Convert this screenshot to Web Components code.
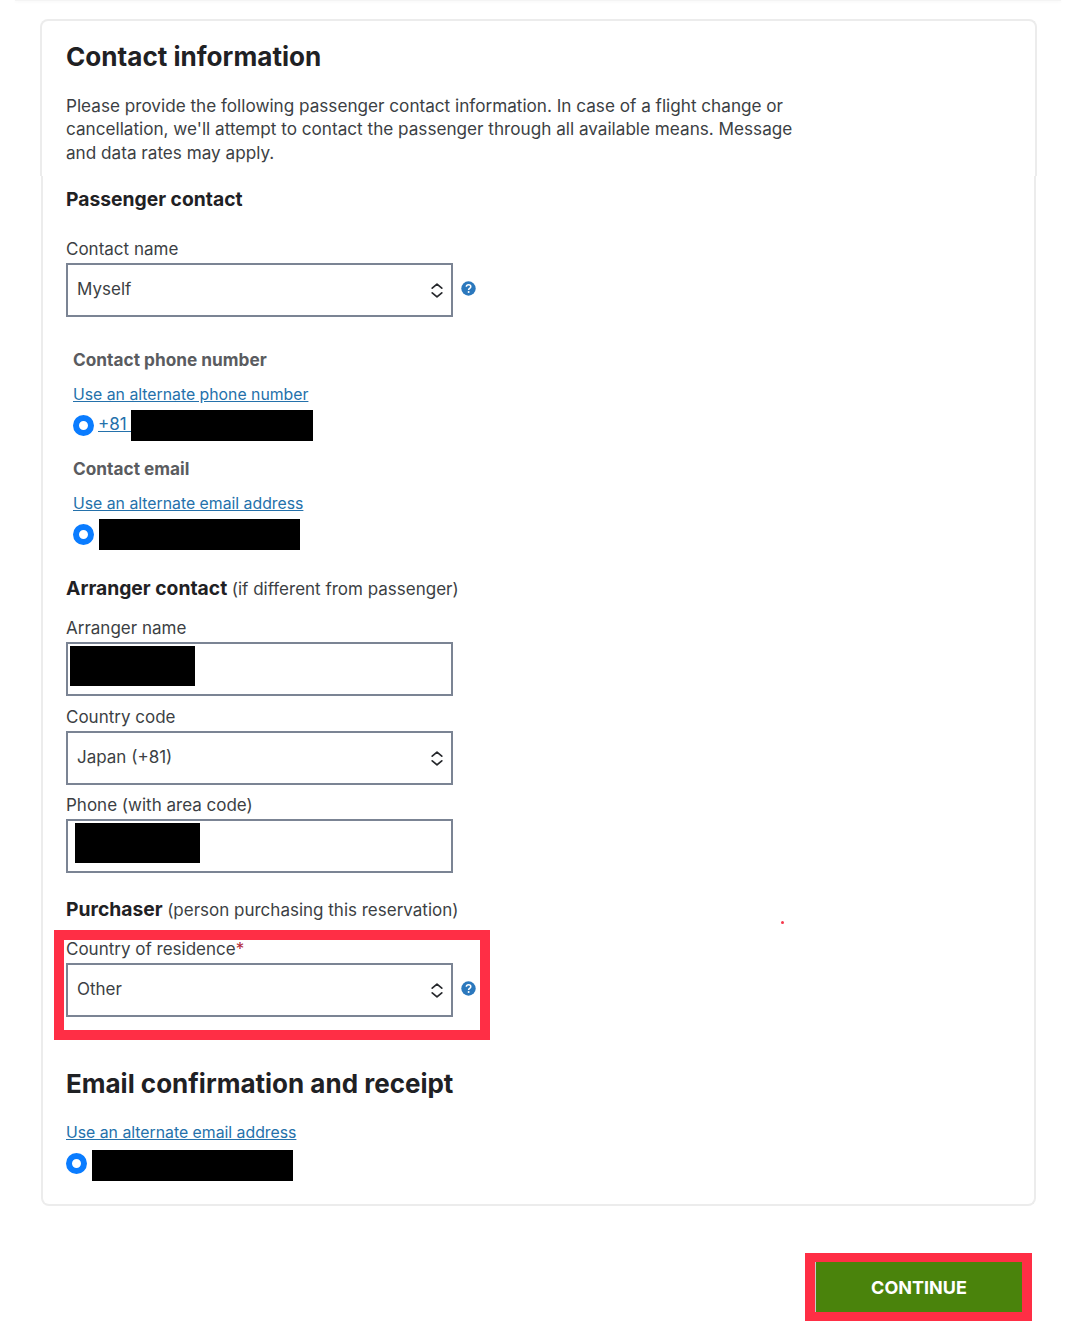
<!doctype html>
<html lang="en">
<head>
<meta charset="utf-8">
<title>Contact information</title>
<style>
  html, body { margin: 0; background: #fff; }
  body { font-family: "Inter", "Liberation Sans", sans-serif; color: #2a2c30; }
</style>
</head>
<body>
<checkout-page>
  <contact-card>
    <card-intro slot="intro" title-text="Contact information">
      Please provide the following passenger contact information. In case of a flight change or
      cancellation, we'll attempt to contact the passenger through all available means. Message
      and data rates may apply.
    </card-intro>

    <section-title style="margin-top:0">Passenger contact</section-title>
    <form-select style="margin-top:26px" label="Contact name" value="Myself" help></form-select>

    <contact-option style="margin-top:32px" heading="Contact phone number" link="Use an alternate phone number" phone="+81 " block="182"></contact-option>
    <contact-option style="margin-top:17px" heading="Contact email" link="Use an alternate email address" block="201"></contact-option>

    <section-title style="margin-top:25px">Arranger contact <span>(if different from passenger)</span></section-title>
    <text-field style="margin-top:15px" label="Arranger name" block-left="2"></text-field>
    <form-select style="margin-top:10px" label="Country code" value="Japan (+81)"></form-select>
    <text-field style="margin-top:9px" label="Phone (with area code)" block-left="7"></text-field>

    <section-title style="margin-top:23px">Purchaser <span>(person purchasing this reservation)</span></section-title>
    <callout-frame style="margin-top:15px">
      <form-select label="Country of residence" value="Other" required help></form-select>
    </callout-frame>

    <section-title big style="margin-top:49px">Email confirmation and receipt</section-title>
    <contact-option bare style="margin-top:19px" link="Use an alternate email address" block="201"></contact-option>
  </contact-card>
  <continue-bar>CONTINUE</continue-bar>
</checkout-page>

<script>
  // shared text settings, custom properties go through the shadow boundary
  const base = `
    * { box-sizing: border-box; }
  `;

  function shadow(el, html) {
    el.attachShadow({ mode: 'open' });
    el.shadowRoot.innerHTML = `<style>${base}</style>` + html;
  }

  customElements.define('checkout-page', class extends HTMLElement {
    connectedCallback() {
      shadow(this, `
        <style>
          :host { display: block; width: 1083px; height: 1342px; overflow: hidden; position: relative; }
          .strip { height: 1px; margin: 0 22px 0 15px; background: #f4f4f4; box-shadow: 0 1px 3px #f2f2f2; }
          .body { padding: 18px 47px 0 41px; }
          /* stray red speck in the screenshot */
          .speck { position: absolute; left: 781px; top: 921px; width: 3px; height: 3px; border-radius: 50%; background: #f5384c; }
        </style>
        <div class="strip"></div>
        <div class="body"><slot></slot></div>
        <div class="speck"></div>
      `);
    }
  });

  customElements.define('contact-card', class extends HTMLElement {
    connectedCallback() {
      shadow(this, `
        <style>
          :host { display: block; }
          .bottom {
            background: #fff;
            height: 1030px;
            padding: 10px 23px 0 23px;
            border: solid #ececec;
            border-width: 0 2px 2px 2px;
            border-radius: 0 0 8px 8px;
          }
        </style>
        <slot name="intro"></slot>
        <div class="bottom"><slot></slot></div>
      `);
    }
  });

  customElements.define('card-intro', class extends HTMLElement {
    connectedCallback() {
      shadow(this, `
        <style>
          :host { display: block; }
          .top {
            height: 157px;
            margin: 0 -1px;
            padding: 18px 24px 0 24px;
            border: solid #ececec;
            border-width: 2px 2px 0 2px;
            border-radius: 8px 8px 0 0;
          }
          h1 { margin: 0; font-size: 26.1px; line-height: 36px; font-weight: 700; color: #1f2124; }
          p { margin: 19px 0 0; width: 745px; font-size: 17.15px; line-height: 23.4px; color: #3c3f44; }
        </style>
        <div class="top">
          <h1>${this.getAttribute('title-text')}</h1>
          <p><slot></slot></p>
        </div>
      `);
    }
  });

  customElements.define('section-title', class extends HTMLElement {
    connectedCallback() {
      shadow(this, `
        <style>
          :host { display: block; font-size: 19.3px; line-height: 26px; font-weight: 700; color: #1f2124; }
          :host([big]) { font-size: 26px; line-height: 36px; }
          ::slotted(span) { font-size: 17px; font-weight: 400; color: #3c3f44; }
        </style>
        <slot></slot>
      `);
    }
  });

  const chevrons = `<svg width="12" height="15" viewBox="0 0 12 15" fill="none" stroke="#26282c" stroke-width="1.7" stroke-linecap="round" stroke-linejoin="round"><path d="M1.2 5.2 6 1.2l4.800 4"/><path d="M1.2 9.8 6 13.8l4.800-4"/></svg>`;

  customElements.define('help-icon', class extends HTMLElement {
    connectedCallback() {
      shadow(this, `
        <style>:host { display: block; width: 15px; height: 15px; } svg { display: block; }</style>
        <svg width="15" height="15" viewBox="0 0 15 15">
          <circle cx="7.5" cy="7.5" r="7.2" fill="#2b78bd"/>
          <path d="M5.3 5.8c.1-1.300 1-2 2.300-2s2.200.8 2.200 1.900c0 1.700-2.200 1.700-2.200 3.200" fill="none" stroke="#fff" stroke-width="1.500"/>
          <circle cx="7.6" cy="11.100" r="1" fill="#fff"/>
        </svg>
      `);
    }
  });

  customElements.define('form-select', class extends HTMLElement {
    connectedCallback() {
      const star = this.hasAttribute('required') ? '<b>*</b>' : '';
      const help = this.hasAttribute('help') ? '<help-icon></help-icon>' : '';
      shadow(this, `
        <style>
          :host { display: block; }
          label { display: block; font-size: 17px; line-height: 22px; margin-bottom: 3px; color: #3c3f44; }
          b { color: #b22a3a; font-weight: 400; }
          .row { display: flex; align-items: center; gap: 8px; }
          .box {
            width: 387px; height: 54px; flex: none;
            display: flex; align-items: center; justify-content: space-between;
            padding: 0 8px 0 9px;
            border: 2px solid #7b8494;
            font-size: 17px; color: #3c3f44;
          }
          .box span { margin-top: -3px; }
          help-icon { margin-top: -3px; }
        </style>
        <label>${this.getAttribute('label')}${star}</label>
        <div class="row">
          <div class="box"><span>${this.getAttribute('value')}</span>${chevrons}</div>
          ${help}
        </div>
      `);
    }
  });

  customElements.define('redact-block', class extends HTMLElement {
    connectedCallback() {
      shadow(this, `<style>:host { display: block; flex: none; background: #000; width: var(--w); height: var(--h); }</style>`);
    }
  });

  customElements.define('text-field', class extends HTMLElement {
    connectedCallback() {
      const left = this.getAttribute('block-left');
      shadow(this, `
        <style>
          :host { display: block; }
          label { display: block; font-size: 17px; line-height: 22px; margin-bottom: 3px; color: #3c3f44; }
          .box {
            width: 387px; height: 54px;
            padding: 2px 0 0 ${left}px;
            border: 2px solid #7b8494;
          }
          redact-block { --w: 125px; --h: 40px; }
        </style>
        <label>${this.getAttribute('label')}</label>
        <div class="box"><redact-block></redact-block></div>
      `);
    }
  });

  customElements.define('radio-dot', class extends HTMLElement {
    connectedCallback() {
      shadow(this, `
        <style>
          :host { display: block; flex: none; width: 21px; height: 21px; border-radius: 50%; border: 6px solid #0a7cff; background: #fff; }
        </style>
      `);
    }
  });

  customElements.define('contact-option', class extends HTMLElement {
    connectedCallback() {
      const heading = this.getAttribute('heading');
      const phone = this.getAttribute('phone');
      const w = this.getAttribute('block');
      shadow(this, `
        <style>
          :host { display: block; padding-left: 7px; }
          :host([bare]) { padding-left: 0; }
          :host([bare]) .row { margin-top: 7px; }
          :host([bare]) radio-dot { margin-top: -5px; }
          h3 { margin: 0 0 12px; font-size: 17.25px; line-height: 22px; font-weight: 700; color: #5a5c60; }
          a { color: #2471ab; text-decoration: underline; font-size: 15.8px; line-height: 22px; }
          .link { line-height: 22px; height: 22px; }
          .row { display: flex; align-items: center; height: 31px; margin-top: 5px; gap: 5px; }
          .row a { margin: -4px -5px 0 -1px; font-size: 17px; white-space: pre; width: 33px; overflow: hidden; }
          redact-block { --w: ${w}px; --h: 31px; }
        </style>
        ${heading ? `<h3>${heading}</h3>` : ''}
        <div class="link"><a href="#">${this.getAttribute('link')}</a></div>
        <div class="row">
          <radio-dot></radio-dot>
          ${phone ? `<a href="#">${phone}</a>` : ''}
          <redact-block></redact-block>
        </div>
      `);
    }
  });

  // red annotation drawn on top of the field
  customElements.define('callout-frame', class extends HTMLElement {
    connectedCallback() {
      shadow(this, `
        <style>
          :host { display: block; position: relative; }
          .frame { position: absolute; left: -12px; top: -8px; width: 436px; height: 110px; border: 10px solid #ff2e45; pointer-events: none; }
        </style>
        <slot></slot>
        <div class="frame"></div>
      `);
    }
  });

  customElements.define('continue-bar', class extends HTMLElement {
    connectedCallback() {
      shadow(this, `
        <style>
          :host { display: block; margin-top: 47px; }
          .wrap { display: flex; justify-content: flex-end; padding-right: 4px; }
          .frame { width: 227px; height: 68px; padding: 9px 10px; background: #ff2e45; }
          button {
            display: block; width: 100%; height: 100%; border: 0; border-left: 1px solid #c9c9c9; padding: 2px 0 0;
            background: #4a830c; color: #fff; font: 700 18px/1 "Inter", sans-serif;
          }
        </style>
        <div class="wrap"><div class="frame"><button><slot></slot></button></div></div>
      `);
    }
  });
</script>
</body>
</html>
